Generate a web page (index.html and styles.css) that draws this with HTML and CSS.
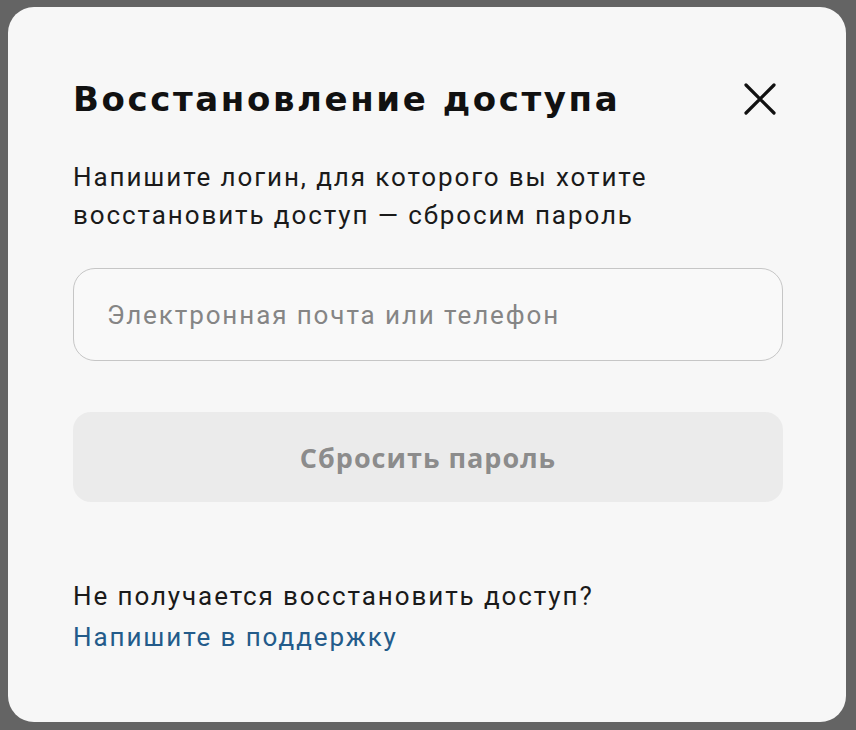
FILE: index.html
```html
<!DOCTYPE html>
<html lang="ru">
<head>
<meta charset="utf-8">
<link rel="stylesheet" href="styles.css">
</head>
<body>
<div class="modal">
  <div class="header">
    <h1 class="title">Восстановление доступа</h1>
    <button class="close" aria-label="Закрыть">
      <svg width="34" height="34" viewBox="0 0 34 34"><path d="M3 3L31 31M31 3L3 31" stroke="#111" stroke-width="3.2" stroke-linecap="round"/></svg>
    </button>
  </div>
  <p class="desc">Напишите логин, для которого вы хотите восстановить доступ — сбросим пароль</p>
  <div class="field">Электронная почта или телефон</div>
  <div class="btn">Сбросить пароль</div>
  <div class="help">
    <div class="help-q">Не получается восстановить доступ?</div>
    <a class="help-link" href="#">Напишите в поддержку</a>
  </div>
</div>
</body>
</html>
```
FILE: styles.css
```css
html, body { margin: 0; padding: 0; }
body {
  background: #646464;
  width: 856px;
  height: 730px;
  overflow: hidden;
  font-family: Roboto, "Noto Sans", sans-serif;
}
.modal {
  box-sizing: border-box;
  margin: 7px 0 0 8px;
  width: 838px;
  height: 715px;
  background: #f7f7f7;
  border-radius: 26px;
  padding: 71px 63px 0 65px;
}
.header {
  display: flex;
  justify-content: space-between;
  align-items: center;
  height: 42px;
}
.title {
  margin: 0;
  font-family: "DejaVu Sans", sans-serif;
  font-weight: 700;
  font-size: 34px;
  color: #111;
  letter-spacing: 2.6px;
}
.close {
  background: none;
  border: 0;
  padding: 0;
  margin-right: 6px;
  display: flex;
}
.desc {
  margin: 38px 0 0;
  font-size: 26px;
  line-height: 38px;
  letter-spacing: 1.9px;
  color: #1a1a1a;
  width: 660px;
}
.field {
  margin-top: 34px;
  box-sizing: border-box;
  height: 93px;
  border: 1.5px solid #c6c6c6;
  border-radius: 22px;
  display: flex;
  align-items: center;
  padding-left: 33px;
  font-size: 26px;
  letter-spacing: 1.9px;
  color: #858585;
  background: #f9f9f9;
}
.btn {
  margin-top: 51px;
  height: 90px;
  border-radius: 18px;
  background: #ebebeb;
  display: flex;
  align-items: center;
  justify-content: center;
  font-family: "Open Sans", sans-serif;
  font-weight: 700;
  font-size: 27px;
  letter-spacing: 1px;
  color: #8c8c8c;
}
.help {
  margin-top: 74px;
  font-size: 26px;
  line-height: 41px;
  letter-spacing: 1.9px;
}
.help-q { color: #1a1a1a; }
.help-link { color: #235b8a; text-decoration: none; }
```
